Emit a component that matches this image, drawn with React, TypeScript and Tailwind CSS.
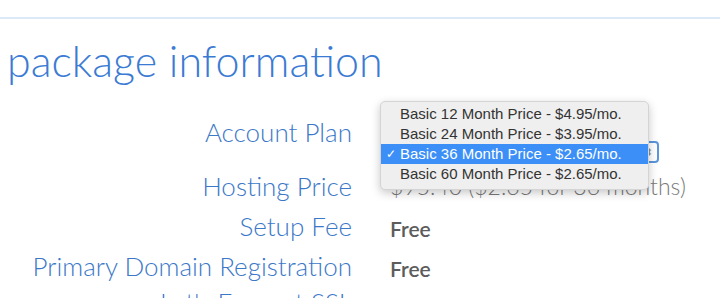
import React from 'react';

const plans = [
  'Basic 12 Month Price - $4.95/mo.',
  'Basic 24 Month Price - $3.95/mo.',
  'Basic 36 Month Price - $2.65/mo.',
  'Basic 60 Month Price - $2.65/mo.',
];

const rows = [
  { label: 'Hosting Price', value: '$95.40  ($2.65 for 36 months)', strong: false },
  { label: 'Setup Fee', value: 'Free', strong: true },
  { label: 'Primary Domain Registration', value: 'Free', strong: true },
  { label: "Let's Encrypt SSL", value: '', strong: true },
];

const App = () => {
  const selected = 2;

  return (
    <div className="relative w-[720px] h-[298px] overflow-hidden bg-white font-['Lato','Open_Sans',sans-serif]">
      <div className="mt-[17px] h-[2px] bg-[#dde9f7]" />

      <h1 className="mt-[17px] pl-[7px] text-[43px] leading-[50px] font-light text-[#3b7bd4] whitespace-nowrap">
        package information
      </h1>

      <div className="mt-[32px] grid grid-cols-[352px_1fr] gap-x-[38px]">
        {/* account plan row */}
        <div className="h-[54px] text-right text-[26px] leading-[28px] font-light text-[#3c78c8] whitespace-nowrap">
          Account Plan
        </div>
        <div className="h-[54px]">
          <div className="mt-[23px] w-[269px] h-[22px] rounded-[4px] border-2 border-[#5a97dc] flex items-center justify-end pr-[4px] text-[11px] text-[#888] font-['Liberation_Sans',sans-serif]">
            ⬍
          </div>
        </div>

        {rows.map((row, i) => (
          <React.Fragment key={row.label}>
            <div
              className={
                i === 2
                  ? 'h-[36px] text-right text-[26px] leading-[28px] font-light text-[#3c78c8] whitespace-nowrap'
                  : 'h-[40px] text-right text-[26px] leading-[28px] font-light text-[#3c78c8] whitespace-nowrap'
              }
            >
              {row.label}
            </div>
            <div
              className={
                row.strong
                  ? 'pt-[5px] text-[21px] leading-[24px] font-semibold text-[#5c5c5c] whitespace-nowrap'
                  : 'text-[23px] leading-[28px] font-light text-[#7a7a7a] whitespace-nowrap'
              }
            >
              {row.value}
            </div>
          </React.Fragment>
        ))}
      </div>

      {/* open select menu */}
      <div className="absolute left-[380px] top-[101px] w-[269px] rounded-[5px] bg-[#efefef] border border-[#d4d4d4] shadow-[0_3px_10px_rgba(0,0,0,0.22)] pt-[2px] pb-[5px] font-['Liberation_Sans',sans-serif] text-[15px]">
        {plans.map((plan, i) => (
          <div
            key={plan}
            className={
              i === selected
                ? 'relative h-[20px] leading-[20px] pl-[19px] bg-[#3b8ff6] text-white whitespace-nowrap'
                : 'relative h-[20px] leading-[20px] pl-[19px] text-[#333] whitespace-nowrap'
            }
          >
            {i === selected && (
              <span className="absolute left-[5px] top-0 text-[12px]">✓</span>
            )}
            {plan}
          </div>
        ))}
      </div>
    </div>
  );
};

export default App;
